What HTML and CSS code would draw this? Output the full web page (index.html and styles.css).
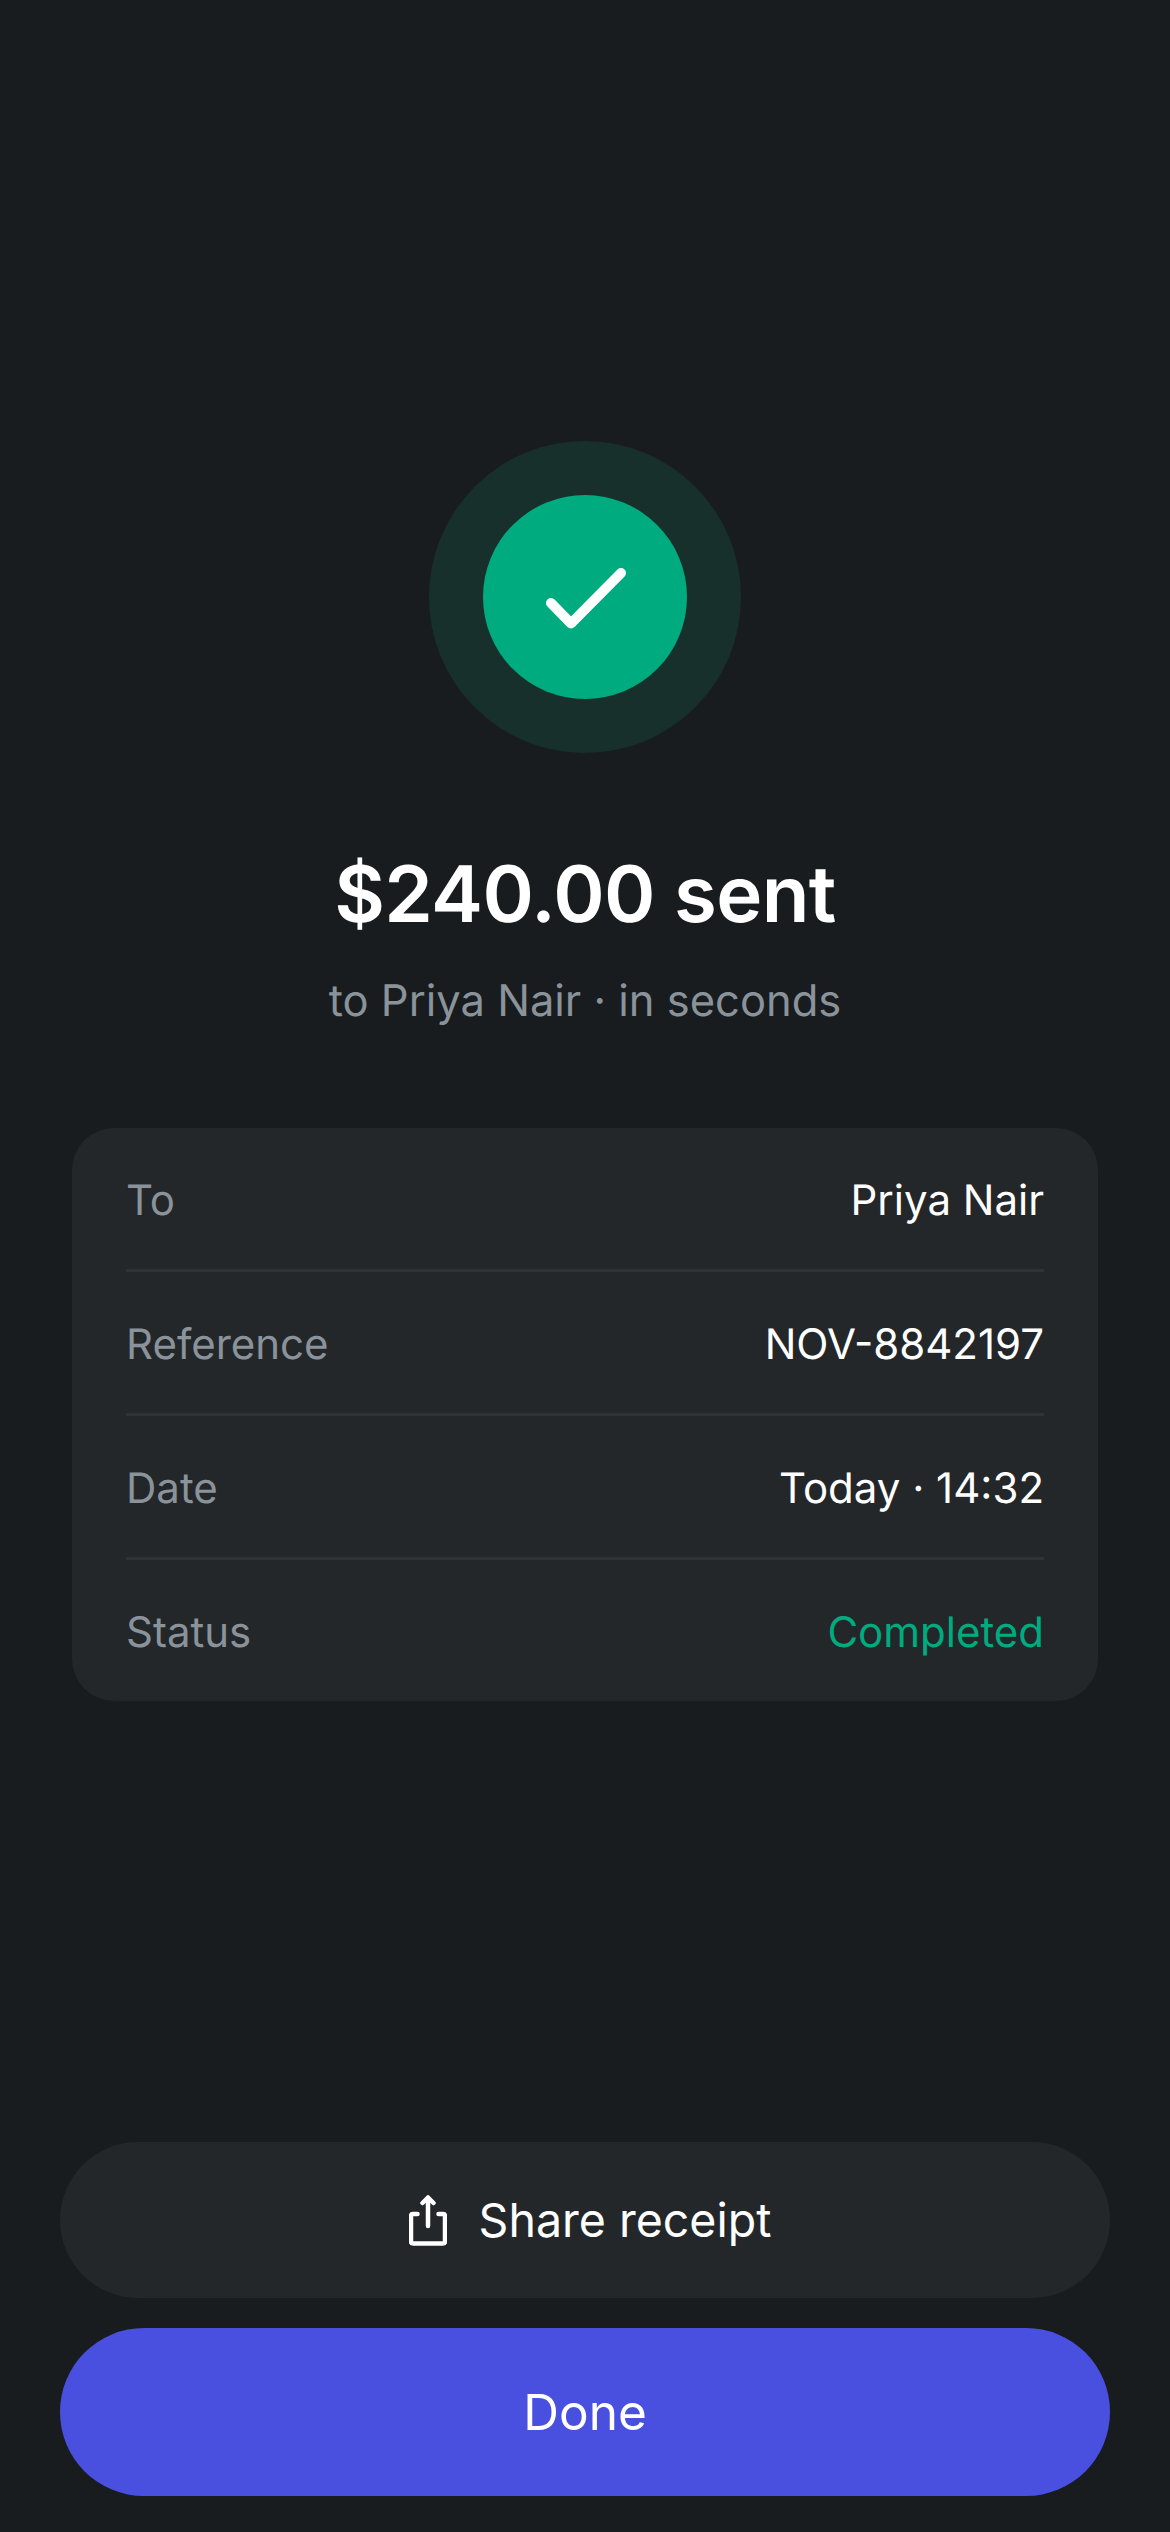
FILE: index.html
```html
<!DOCTYPE html>
<html lang="en">
<head>
<meta charset="utf-8">
<title>Payment sent</title>
<link rel="stylesheet" href="styles.css">
</head>
<body>
<main class="screen">
  <section class="hero">
    <div class="ring">
      <div class="disc">
        <svg class="check" viewBox="0 0 204 204" aria-hidden="true"><path d="M68 108 L88 128.500 L138 78"/></svg>
      </div>
    </div>
    <h1 class="title">$240.00 sent</h1>
    <p class="subtitle">to Priya Nair · in seconds</p>
  </section>
  <section class="card">
    <div class="row"><span class="label">To</span><span class="value">Priya Nair</span></div>
    <div class="row"><span class="label">Reference</span><span class="value">NOV-8842197</span></div>
    <div class="row"><span class="label">Date</span><span class="value">Today · 14:32</span></div>
    <div class="row"><span class="label">Status</span><span class="value value-ok">Completed</span></div>
  </section>
  <div class="actions">
    <button class="btn btn-secondary" type="button">
      <svg class="share" viewBox="0 0 38 51" aria-hidden="true"><path d="M8.500 19 H4 Q2 19 2 21 V46.500 Q2 48.500 4 48.500 H34 Q36 48.500 36 46.500 V21 Q36 19 34 19 H29.500"/><path d="M19 31 V3"/><path d="M13.500 8 L19 2.500 L24.500 8"/></svg>
      <span>Share receipt</span>
    </button>
    <button class="btn btn-primary" type="button">Done</button>
  </div>
</main>
</body>
</html>
```
FILE: styles.css
```css
* { box-sizing: border-box; }
html, body { margin: 0; padding: 0; }
body {
  background: #181c1f;
  font-family: Inter, "Liberation Sans", sans-serif;
  color: #fff;
  text-rendering: geometricPrecision;
}
.screen {
  height: 2532px;
  display: flex;
  flex-direction: column;
  padding: 441px 60px 36px;
}
.hero {
  display: flex;
  flex-direction: column;
  align-items: center;
}
.ring {
  width: 312px;
  height: 312px;
  border-radius: 50%;
  background: #17302c;
  display: flex;
  align-items: center;
  justify-content: center;
}
.disc {
  width: 204px;
  height: 204px;
  border-radius: 50%;
  background: #00ab7f;
}
.check {
  display: block;
  width: 204px;
  height: 204px;
  fill: none;
  stroke: #fff;
  stroke-width: 10px;
  stroke-linecap: round;
  stroke-linejoin: round;
}
.title {
  margin: 94px 0 0;
  font-size: 78px;
  line-height: 94px;
  font-weight: 600;
  letter-spacing: -0.6px;
  text-align: center;
}
.subtitle {
  margin: 35px 0 0;
  font-size: 43.5px;
  line-height: 51px;
  color: #8a929a;
  text-align: center;
}
.card {
  margin: 101px 12px 0;
  padding: 0 54px;
  background: #23272a;
  border-radius: 42px;
}
.row {
  height: 144px;
  display: flex;
  align-items: center;
  justify-content: space-between;
  border-bottom: 3px solid #2d3438;
  font-size: 42px;
  padding-top: 3px;
}
.row:last-child {
  height: 141px;
  border-bottom: 0;
}
.label { color: #8a929a; }
.value { color: #fff; }
.value-ok { color: #00ab7f; }
.actions {
  margin-top: auto;
  display: flex;
  flex-direction: column;
  gap: 30px;
}
.btn {
  width: 100%;
  border: 0;
  border-radius: 84px;
  color: #fff;
  font-family: inherit;
  font-weight: 400;
  display: flex;
  align-items: center;
  justify-content: center;
}
.btn-secondary {
  height: 156px;
  gap: 32px;
  padding-left: 16px;
  background: #23272a;
  font-size: 46.500px;
}
.btn-primary {
  height: 168px;
  background: #4950df;
  font-size: 49.500px;
}
.share {
  width: 38px;
  height: 51px;
  fill: none;
  stroke: #fff;
  stroke-width: 4.500px;
  stroke-linecap: round;
  stroke-linejoin: round;
}
```
